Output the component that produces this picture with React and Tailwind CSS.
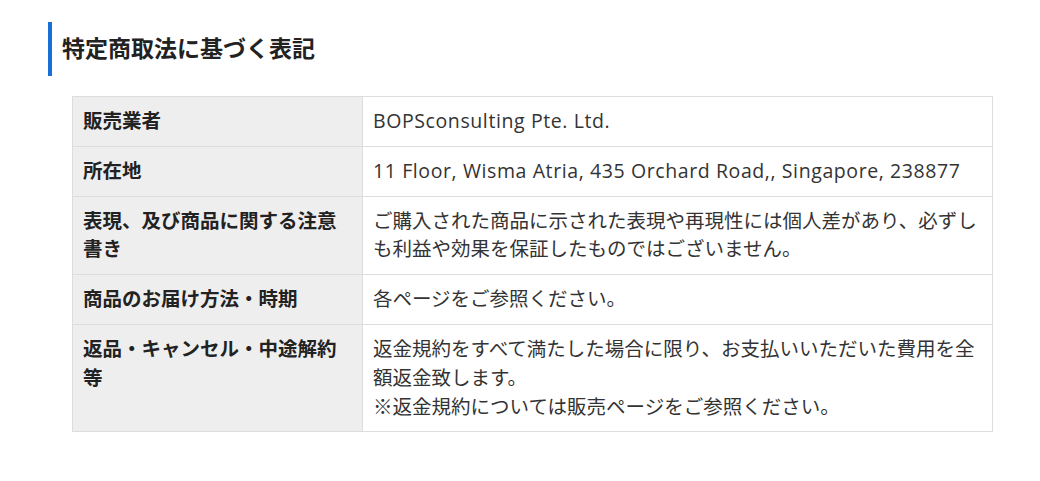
import React from 'react';

const rows = [
  { label: '販売業者', value: ['BOPSconsulting Pte. Ltd.'], latin: true },
  { label: '所在地', value: ['11 Floor, Wisma Atria, 435 Orchard Road,, Singapore, 238877'], latin: true },
  {
    label: '表現、及び商品に関する注意書き',
    value: ['ご購入された商品に示された表現や再現性には個人差があり、必ずしも利益や効果を保証したものではございません。'],
  },
  { label: '商品のお届け方法・時期', value: ['各ページをご参照ください。'] },
  {
    label: '返品・キャンセル・中途解約等',
    value: [
      '返金規約をすべて満たした場合に限り、お支払いいただいた費用を全額返金致します。',
      '※返金規約については販売ページをご参照ください。',
    ],
  },
];

const App = () => {
  return (
    <div
      className="min-h-[481px] bg-white text-[#333] pl-12 pr-[47px] pt-[22px]"
      style={{ fontFamily: '"Open Sans", "Noto Sans CJK JP", sans-serif' }}
    >
      <h2 className="border-l-4 border-[#1a6fd6] pl-[10px] h-[54px] flex items-center pb-[2px] text-[23px] font-bold text-[#222]">
        特定商取法に基づく表記
      </h2>

      <table className="ml-6 mt-5 w-[921px] border-collapse text-[19.5px] leading-[28.8px]">
        <tbody>
          {rows.map((row) => (
            <tr key={row.label}>
              <th className="w-[290px] align-top text-left font-bold bg-[#eeeeee] border border-[#dddddd] px-[10px] py-[10px] text-[#222]">
                {row.label}
              </th>
              <td
                className={
                  row.latin
                    ? 'align-top border border-[#dddddd] px-[10px] py-[10px] tracking-[0.6px]'
                    : 'align-top border border-[#dddddd] px-[10px] py-[10px]'
                }
              >
                {row.value.map((line, i) => (
                  <div key={i}>{line}</div>
                ))}
              </td>
            </tr>
          ))}
        </tbody>
      </table>
    </div>
  );
};

export default App;
